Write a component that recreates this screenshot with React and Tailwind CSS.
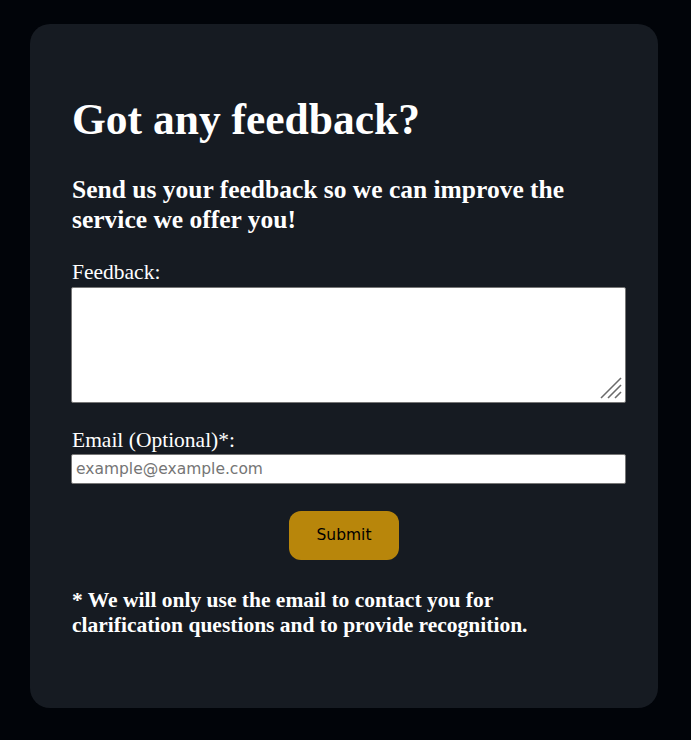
export default function App() {
  return (
    <div className="min-h-screen bg-[#010409] pt-[24px] pb-[32px]">
      <div className="ml-[30px] w-[628px] rounded-[20px] bg-[#161b22] px-[42px] pt-[71px] pb-[70px] text-white [font-family:'Liberation_Serif','Times_New_Roman',serif]">
        <h1 className="text-[43.5px] font-bold leading-[48px]">Got any feedback?</h1>
        <h3 className="mt-[32px] text-[25.5px] font-bold leading-[30px]">
          Send us your feedback so we can improve the service we offer you!
        </h3>

        <form className="mt-[25px]" onSubmit={(e) => e.preventDefault()}>
          <label htmlFor="feedback" className="block text-[21.5px] leading-[24px]">Feedback:</label>
          <div className="relative mt-[2.5px] -ml-px w-[555px]">
            <textarea
              id="feedback"
              className="block h-[116px] w-full resize-none rounded-[2px] border border-[#767676] bg-white p-[3px] text-black"
            />
            {/* resize grip */}
            <svg
              className="pointer-events-none absolute right-[4px] bottom-[4px]"
              width="22"
              height="22"
              viewBox="0 0 22 22"
            >
              <line x1="1" y1="21" x2="21" y2="1" stroke="#6b6b6b" strokeWidth="1.6" />
              <line x1="8" y1="21" x2="21" y2="8" stroke="#6b6b6b" strokeWidth="1.6" />
              <line x1="15" y1="21" x2="21" y2="15" stroke="#6b6b6b" strokeWidth="1.6" />
            </svg>
          </div>

          <label htmlFor="email" className="mt-[25.5px] block text-[21.5px] leading-[24px]">Email (Optional)*:</label>
          <input
            id="email"
            type="email"
            placeholder="example@example.com"
            className="mt-[2px] block h-[30px] w-[555px] -ml-px rounded-[2px] border border-[#767676] bg-white px-[4px] text-[15.5px] text-black placeholder:text-[#757575] [font-family:'DejaVu_Sans',Verdana,sans-serif]"
          />

          <div className="mt-[27px] flex justify-center">
            <button
              type="submit"
              className="h-[49px] w-[110px] rounded-[12px] bg-[#b8860b] text-[15.5px] text-black [font-family:'DejaVu_Sans',Verdana,sans-serif]"
            >
              Submit
            </button>
          </div>
        </form>

        <h4 className="mt-[28px] pr-[24px] text-[21.5px] font-bold leading-[25px]">
          * We will only use the email to contact you for clarification questions and to provide recognition.
        </h4>
      </div>
    </div>
  );
}
